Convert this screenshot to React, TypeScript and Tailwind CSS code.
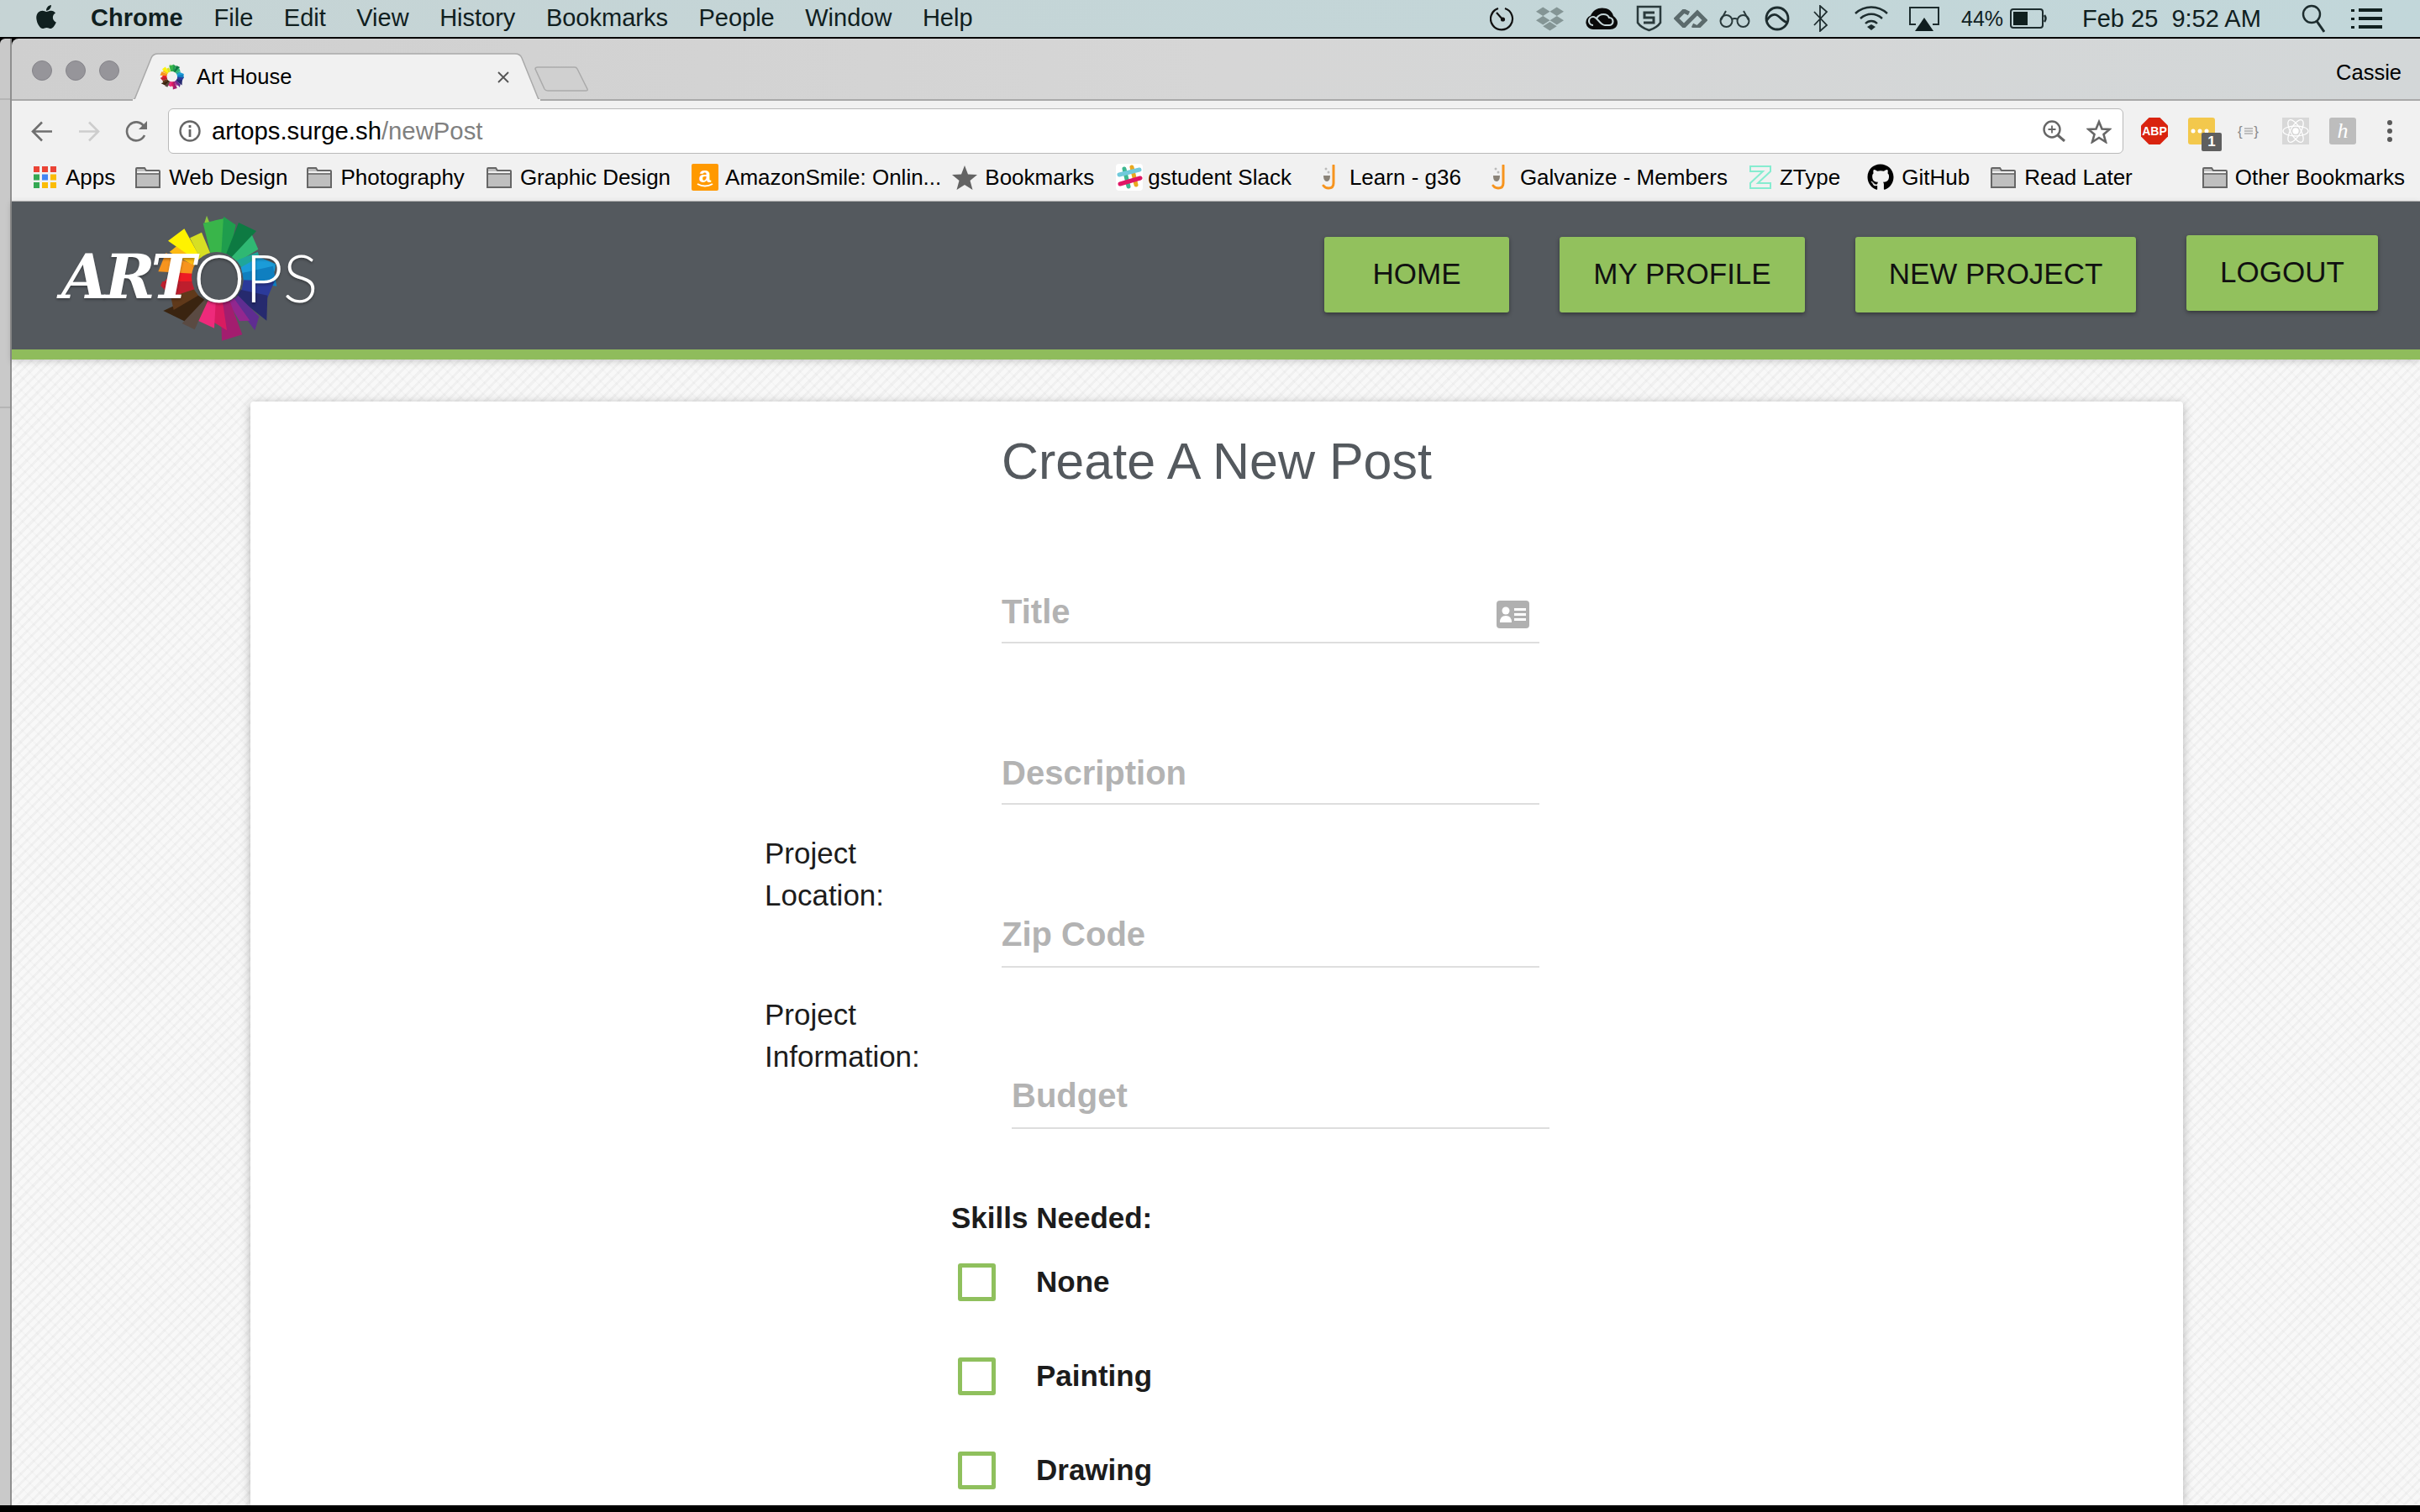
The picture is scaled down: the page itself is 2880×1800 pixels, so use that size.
import React from "react";
import { FaApple, FaGithub, FaDropbox } from "react-icons/fa";

const wedges: [string, string][] = [
  ["#8dc63f", "250,60 258,35 268,60"],
  ["#39b54a", "245,62 320,45 328,170 272,172"],
  ["#1f9d4d", "318,38 362,68 340,172 310,170"],
  ["#0d7a42", "372,60 435,90 350,185 328,170"],
  ["#2fb873", "420,105 442,155 370,200 345,185"],
  ["#1fa69a", "440,165 447,183 385,225 365,195"],
  ["#1b9cd8", "445,183 505,208 500,235 385,240 380,220"],
  ["#0f7fc0", "495,215 508,287 390,270 385,240"],
  ["#2b3a9a", "500,270 470,340 380,315 390,265"],
  ["#262a6e", "475,320 472,410 365,325 380,300"],
  ["#5f2d91", "445,395 430,445 350,338 370,320"],
  ["#92278f", "412,410 375,412 335,345 355,330"],
  ["#a31d6f", "385,460 312,482 308,345 340,340"],
  ["#d81b60", "330,445 265,405 285,345 315,345"],
  ["#ee2a7b", "285,437 222,408 262,338 290,345"],
  ["#5a4a42", "215,442 170,420 245,335 262,340"],
  ["#3a2410", "178,412 103,375 225,318 250,335"],
  ["#60391a", "140,372 130,325 212,298 228,320"],
  ["#be1e2d", "132,325 93,285 100,270 208,265 215,298"],
  ["#ed1c24", "108,270 140,230 210,240 208,270"],
  ["#f7941e", "85,235 112,168 215,212 210,242"],
  ["#fdb913", "125,165 150,145 228,195 215,215"],
  ["#fff200", "120,125 178,82 235,185 225,198"],
  ["#d7df23", "198,115 240,95 272,172 235,188"],
];

function Wheel({ hole, className, viewBox = "0 0 600 510" }: { hole: string; className: string; viewBox?: string }) {
  return (
    <svg viewBox={viewBox} className={className}>
      {wedges.map(([c, p], i) => (
        <polygon key={i} fill={c} points={p} />
      ))}
      <circle cx="294" cy="255" r="90" fill={hole} />
    </svg>
  );
}

function Folder() {
  return (
    <svg viewBox="0 0 30 25" className="w-[30px] h-[25px] shrink-0">
      <path d="M1 24V2q0-1 1-1h9l2 3h15q1 0 1 1v19z" fill="#bfbfbf" stroke="#666" strokeWidth="2" />
      <path d="M1 8h28" stroke="#666" strokeWidth="1.5" />
      <path d="M2 5h26v2H2z" fill="#f1f1f1" />
    </svg>
  );
}

function Apps() {
  const c = ["#ea4335", "#ea4335", "#ea4335", "#34a853", "#4285f4", "#fbbc05", "#34a853", "#fbbc05", "#fbbc05"];
  return (
    <svg viewBox="0 0 27 26" className="w-[27px] h-[26px] shrink-0">
      {c.map((f, i) => (
        <rect key={i} x={(i % 3) * 10} y={Math.floor(i / 3) * 9.5} width="7" height="7" fill={f} />
      ))}
    </svg>
  );
}

function Amazon() {
  return (
    <div className="w-[32px] h-[32px] shrink-0 rounded-[2px] bg-[#ff9900] relative flex justify-center">
      <span className="text-white font-bold text-[26px] leading-[26px]">a</span>
      <svg viewBox="0 0 32 32" className="absolute inset-0">
        <path d="M7 24q9 5 18 0" stroke="#fff" strokeWidth="2" fill="none" />
      </svg>
    </div>
  );
}

function Star() {
  return (
    <svg viewBox="0 0 30 29" className="w-[30px] h-[29px] shrink-0">
      <path d="M15 0l4 10.500 11 .500-8.500 7 3 11L15 23l-9.500 6 3-11L0 11l11-.500z" fill="#636363" />
    </svg>
  );
}

function Slack() {
  return (
    <svg viewBox="0 0 32 32" className="w-[32px] h-[32px] shrink-0">
      <rect width="32" height="32" rx="4" fill="#fff" />
      <g strokeWidth="5" strokeLinecap="round">
        <path d="M10 6l5 21" stroke="#3eb890" />
        <path d="M19 4l5 21" stroke="#e9a820" />
        <path d="M4 13l24-6" stroke="#70cadb" />
        <path d="M5 24l24-7" stroke="#e01765" />
      </g>
    </svg>
  );
}

function Galvanize() {
  return (
    <svg viewBox="0 0 18 30" className="w-[18px] h-[30px] shrink-0">
      <path d="M14 1v21q0 6-6 6-4 0-6-3" stroke="#f7941e" strokeWidth="3" fill="none" strokeLinecap="round" />
      <path d="M2 13h8q0 7-4 7t-4-7z" fill="#8a8378" />
      <circle cx="5" cy="5" r="1.500" fill="#bbb" />
      <circle cx="8" cy="9" r="1.500" fill="#bbb" />
    </svg>
  );
}

function ZType() {
  return (
    <svg viewBox="0 0 26 28" className="w-[26px] h-[28px] shrink-0">
      <path d="M1 1h24v6L10 21h15v6H1v-6L16 7H1z" fill="none" stroke="#86ecd0" strokeWidth="2" />
    </svg>
  );
}

const bookmarks: { icon: React.ReactNode; label: string; cls: string }[] = [
  { icon: <Apps />, label: "Apps", cls: "ml-[26px] gap-[11px]" },
  { icon: <Folder />, label: "Web Design", cls: "ml-[24px] gap-[10px]" },
  { icon: <Folder />, label: "Photography", cls: "ml-[23px] gap-[10px]" },
  { icon: <Folder />, label: "Graphic Design", cls: "ml-[26px] gap-[10px]" },
  { icon: <Amazon />, label: "AmazonSmile: Onlin...", cls: "ml-[25px] gap-[8px]" },
  { icon: <Star />, label: "Bookmarks", cls: "ml-[13px] gap-[9px]" },
  { icon: <Slack />, label: "gstudent Slack", cls: "ml-[26px] gap-[6px]" },
  { icon: <Galvanize />, label: "Learn - g36", cls: "ml-[36px] gap-[15px]" },
  { icon: <Galvanize />, label: "Galvanize - Members", cls: "ml-[36px] gap-[16px]" },
  { icon: <ZType />, label: "ZType", cls: "ml-[26px] gap-[10px]" },
  { icon: <FaGithub className="w-[32px] h-[32px] shrink-0 text-black" />, label: "GitHub", cls: "ml-[32px] gap-[9px]" },
  { icon: <Folder />, label: "Read Later", cls: "ml-[25px] gap-[10px]" },
];

function MenuIcons() {
  return (
    <div className="ml-auto flex items-center pr-[45px] text-[#10201f]">
      <svg viewBox="0 0 30 30" className="w-[30px] h-[30px]" fill="none" stroke="#111" strokeWidth="2.200">
        <path d="M10 3a13 13 0 1 0 8 0" />
        <path d="M8 8l8 9" />
        <circle cx="15.500" cy="16" r="1.500" fill="#111" />
      </svg>
      <FaDropbox className="ml-[25px] w-[33px] h-[33px] text-[#849595]" />
      <svg viewBox="0 0 38 28" className="ml-[26px] w-[38px] h-[28px]">
        <path d="M9 27a8.500 8.500 0 0 1-3-16.500C9 3 17 0 24 2c5 1 8 5 9 9 3 2 5 5 5 8 0 5-4 8-9 8z" fill="#0a0a0a" />
        <path d="M9 22a5 5 0 0 1 0-10c5 0 8 10 14 10h5a4.500 4.500 0 0 0 0-9c-2-5-11-6-15 1" fill="none" stroke="#c5d5d7" strokeWidth="2.200" />
      </svg>
      <svg viewBox="0 0 31 32" className="ml-[22px] w-[31px] h-[32px]" fill="none" stroke="#2a3a3c" strokeWidth="2.500">
        <path d="M2 2h27v19q-4 6-13.500 9Q6 27 2 21z" />
        <path d="M22 9H10v6h11v6H9" strokeWidth="3" />
      </svg>
      <svg viewBox="0 0 40 22" className="ml-[14px] w-[40px] h-[22px]" fill="none" stroke="#5b6a6c" strokeWidth="5">
        <path d="M18 5l-6-3-9 9 9 9 8-8 8-8 9 9-9 9-6-3" />
      </svg>
      <svg viewBox="0 0 37 22" className="ml-[14px] w-[37px] h-[22px]" fill="none" stroke="#2a3a3c" strokeWidth="2">
        <circle cx="8.500" cy="14" r="7" />
        <circle cx="28.500" cy="14" r="7" />
        <path d="M15 12q3.500-2 7 0M2 13L8 2M35 13L29 2" />
      </svg>
      <svg viewBox="0 0 30 30" className="ml-[17px] w-[30px] h-[30px]" fill="none" stroke="#1d2c2e" strokeWidth="2.800">
        <circle cx="15" cy="15" r="13" />
        <path d="M2 18c5-8 10-9 14-6s7 7 11 8" />
      </svg>
      <svg viewBox="0 0 18 32" className="ml-[28px] w-[18px] h-[32px]" fill="none" stroke="#1d2c2e" strokeWidth="1.800">
        <path d="M1 8l15 16-8 7V1l8 7L1 24" />
      </svg>
      <svg viewBox="0 0 40 30" className="ml-[31px] w-[40px] h-[30px]" fill="none" stroke="#1d2c2e" strokeWidth="2.400">
        <path d="M1 9c11-10 27-10 38 0M7 15c8-7 18-7 26 0M13 21c4-4 10-4 14 0" />
        <path d="M15 25l5-3 5 3-5 4z" fill="#1d2c2e" stroke="none" />
      </svg>
      <svg viewBox="0 0 36 29" className="ml-[25px] w-[36px] h-[29px]">
        <path d="M8 21H1V1h34v20h-7" fill="none" stroke="#1d2c2e" strokeWidth="2" />
        <path d="M18 13l11 16H7z" fill="#0f1d1f" />
      </svg>
      <span className="ml-[26px] text-[25px] leading-none w-[49px] whitespace-nowrap">44%</span>
      <svg viewBox="0 0 45 24" className="ml-[9px] w-[45px] h-[24px]">
        <rect x="1" y="1" width="38" height="22" rx="3" fill="none" stroke="#1d2c2e" strokeWidth="2" />
        <rect x="4" y="4" width="17" height="16" fill="#10201f" />
        <path d="M41 8q3 4 0 8" stroke="#1d2c2e" strokeWidth="2.500" fill="none" />
      </svg>
      <span className="ml-[41px] w-[214px] text-[29px] leading-none whitespace-pre">Feb 25  9:52 AM</span>
      <svg viewBox="0 0 28 34" className="ml-[47px] w-[28px] h-[34px]" fill="none" stroke="#1d2c2e" strokeWidth="2.400">
        <circle cx="12" cy="12" r="10" />
        <path d="M18 20l9 13" strokeWidth="3" />
      </svg>
      <svg viewBox="0 0 37 24" className="ml-[31px] w-[37px] h-[24px]" fill="#10201f">
        <rect x="0" y="1" width="4" height="3" />
        <rect x="9" y="0" width="28" height="4" />
        <rect x="0" y="11" width="4" height="3" />
        <rect x="9" y="10" width="28" height="4" />
        <rect x="0" y="21" width="4" height="3" />
        <rect x="9" y="20" width="28" height="4" />
      </svg>
    </div>
  );
}

function MenuBar() {
  const items = ["File", "Edit", "View", "History", "Bookmarks", "People", "Window", "Help"];
  return (
    <div className="h-[46px] shrink-0 border-b-2 border-black bg-gradient-to-r from-[#c6d4d5] to-[#c2d7da] flex items-center pl-[40px] text-[#10201f] text-[29px]">
      <FaApple className="w-[30px] h-[32px] text-[#10201f] -mt-[4px]" />
      <span className="ml-[38px] mr-[37px] font-bold">Chrome</span>
      <div className="flex gap-[36.500px]">
        {items.map((t) => (
          <span key={t}>{t}</span>
        ))}
      </div>
      <MenuIcons />
    </div>
  );
}

function TabStrip() {
  return (
    <div className="h-[74px] shrink-0 border-b-2 border-[#a9a9a9] bg-gradient-to-r from-[#cfcfcf] via-[#d6d6d6] to-[#d3d7d8] flex rounded-tl-[8px]">
      <div className="ml-[24px] mt-[26px] flex gap-[16px]">
        <div className="w-[24px] h-[24px] rounded-full bg-[#96959a] border border-[#85848a]" />
        <div className="w-[24px] h-[24px] rounded-full bg-[#96959a] border border-[#85848a]" />
        <div className="w-[24px] h-[24px] rounded-full bg-[#96959a] border border-[#85848a]" />
      </div>
      <div className="relative ml-[16px] mt-[17px] w-[485px] h-[57px] flex items-center pl-[32px] z-10">
        <svg viewBox="0 0 485 57" className="absolute inset-0 w-[485px] h-[57px]">
          <path d="M0 56q2 0 3-3L22 6q2-5 8-5h425q6 0 8 5l19 47q1 3 3 3z" fill="#f1f1f1" stroke="#a9a9a9" strokeWidth="1.500" />
          <path d="M0 57h485v-2H0z" fill="#f1f1f1" />
        </svg>
        <Wheel hole="#f1f1f1" viewBox="80 30 440 460" className="relative w-[30px] h-[31px]" />
        <span className="relative ml-[14px] text-[25.500px] leading-none text-black">Art House</span>
        <svg viewBox="0 0 14 14" className="absolute left-[434px] top-[22px] w-[14px] h-[14px]" stroke="#555" strokeWidth="1.800">
          <path d="M1 1l12 12M13 1L1 13" />
        </svg>
      </div>
      <svg viewBox="0 0 65 30" className="-ml-[7px] mt-[33px] w-[65px] h-[30px]">
        <path d="M1 3q0-2 3-2h44q2 0 3 2l12 24q1 2-2 2H16q-3 0-4-2z" fill="#d0d0d0" stroke="#aaa" strokeWidth="1.500" />
      </svg>
      <span className="ml-auto mr-[22px] mt-[24px] text-[25.500px] leading-[32px] text-black">Cassie</span>
    </div>
  );
}

function Toolbar() {
  return (
    <div className="h-[63px] shrink-0 bg-[#f1f1f1] flex pt-[9px]">
      <div className="w-[186px] shrink-0 flex items-center pl-[23px] h-[54px]">
        <svg viewBox="0 0 26 25" className="w-[26px] h-[25px]" fill="none" stroke="#6f6f6f" strokeWidth="2.600">
          <path d="M25 12.500H3M13 1.500L2 12.500l11 11" />
        </svg>
        <svg viewBox="0 0 26 25" className="ml-[30px] w-[26px] h-[25px]" fill="none" stroke="#cdcdcd" strokeWidth="2.600">
          <path d="M1 12.500h22M13 1.500l11 11-11 11" />
        </svg>
        <svg viewBox="0 0 28 26" className="ml-[30px] w-[28px] h-[26px]" fill="none" stroke="#6f6f6f" strokeWidth="2.600">
          <path d="M23 18a11 11 0 1 1-1-11" />
          <path d="M26 1v10H16z" fill="#6f6f6f" stroke="none" />
        </svg>
      </div>
      <div className="w-[2327px] h-[54px] shrink-0 bg-white border border-[#b9b9b9] rounded-[6px] flex items-center pl-[12px]">
        <svg viewBox="0 0 26 26" className="w-[26px] h-[26px]" fill="none" stroke="#666" strokeWidth="2.400">
          <circle cx="13" cy="13" r="11.500" />
          <path d="M13 11v9" strokeWidth="2.800" />
          <path d="M13 6v3" strokeWidth="2.800" />
        </svg>
        <span className="ml-[13px] text-[29.300px] leading-none">
          <span className="text-black">artops.surge.sh</span>
          <span className="text-[#808080]">/newPost</span>
        </span>
        <svg viewBox="0 0 28 26" className="ml-auto w-[28px] h-[26px]" fill="none" stroke="#666" strokeWidth="2.400">
          <circle cx="11" cy="11" r="9.500" />
          <path d="M18 18l8 7" strokeWidth="3" />
          <path d="M11 6.500v9M6.500 11h9" strokeWidth="1.800" />
        </svg>
        <svg viewBox="0 0 30 29" className="ml-[24px] mr-[13px] w-[30px] h-[29px]" fill="none" stroke="#666" strokeWidth="2.600">
          <path d="M15 3l3.500 8.500 9 .500-7 6 2.500 9-8-5-8 5 2.500-9-7-6 9-.500z" />
        </svg>
      </div>
      <div className="flex items-center h-[54px] pl-[21px]">
        <div className="relative w-[32px] h-[32px] flex items-center justify-center">
          <svg viewBox="0 0 32 32" className="absolute inset-0">
            <polygon points="9.500,0 22.500,0 32,9.500 32,22.500 22.500,32 9.500,32 0,22.500 0,9.500" fill="#d9230f" />
          </svg>
          <span className="relative text-white font-bold text-[14px] leading-none">ABP</span>
        </div>
        <div className="relative ml-[24px] w-[32px] h-[32px] rounded-[3px] bg-[#f3c84c]">
          <svg viewBox="0 0 32 32" className="absolute inset-0">
            <circle cx="6" cy="16" r="2.500" fill="#fff" />
            <circle cx="14" cy="16" r="2.500" fill="#fff" />
            <circle cx="22" cy="16" r="2.500" fill="#fff" />
          </svg>
          <span className="absolute left-[16px] top-[18px] w-[24px] h-[22px] rounded-[2px] bg-[#5f5f5f] text-white font-bold text-[17px] leading-[22px] text-center">1</span>
        </div>
        <div className="ml-[27px] w-[25px] flex items-center justify-between text-[#8b8b8b] text-[17px] leading-none">
          <span>{"{"}</span>
          <svg viewBox="0 0 10 10" className="w-[10px] h-[10px]" stroke="#8b8b8b" strokeWidth="1.200">
            <path d="M0 2h10M0 5h10M0 8h10" />
          </svg>
          <span>{"}"}</span>
        </div>
        <svg viewBox="0 0 32 32" className="ml-[28px] w-[32px] h-[32px]" fill="none" stroke="#fff" strokeWidth="1.300">
          <rect width="32" height="32" fill="#d8d8d8" stroke="none" />
          <ellipse cx="16" cy="16" rx="15" ry="6" />
          <ellipse cx="16" cy="16" rx="15" ry="6" transform="rotate(60 16 16)" />
          <ellipse cx="16" cy="16" rx="15" ry="6" transform="rotate(120 16 16)" />
          <circle cx="16" cy="16" r="3" fill="#fff" />
        </svg>
        <div className="ml-[24px] w-[32px] h-[32px] rounded-[3px] bg-[#bdbdbd] flex items-center justify-center text-white italic text-[26px] leading-none font-['Liberation_Serif',serif]">h</div>
        <svg viewBox="0 0 6 26" className="ml-[37px] w-[6px] h-[26px]" fill="#5a5a5a">
          <circle cx="3" cy="3" r="3" />
          <circle cx="3" cy="13" r="3" />
          <circle cx="3" cy="23" r="3" />
        </svg>
      </div>
    </div>
  );
}

function Bookmarks() {
  return (
    <div className="h-[57px] shrink-0 bg-[#f1f1f1] border-b border-[#b9b9b9] flex items-center text-[26px] leading-none text-black whitespace-nowrap">
      {bookmarks.map((b) => (
        <div key={b.label} className={"flex items-center " + b.cls}>
          {b.icon}
          <span>{b.label}</span>
        </div>
      ))}
      <div className="ml-auto mr-[18px] flex items-center gap-[9px]">
        <Folder />
        <span>Other Bookmarks</span>
      </div>
    </div>
  );
}

function Header() {
  const btn = "h-[90px] rounded-[3px] bg-[#92c15d] shadow-[0_2px_5px_rgba(0,0,0,0.4)] flex items-center justify-center pb-[4px] text-[35px] leading-none text-[#111]";
  return (
    <div className="relative z-10 h-[188px] shrink-0 border-b-[12px] border-[#8fbc5c] bg-[#54595e] shadow-[0_2px_8px_rgba(0,0,0,0.18)] flex items-start">
      <div className="relative ml-[56px] h-[176px] flex items-center pt-[4px] text-white">
        <Wheel hole="#54595e" className="absolute left-[90px] top-[5px] w-[200px] h-[170px]" />
        <span className="relative w-[160px] pl-[3px] font-['DejaVu_Serif',serif] font-bold italic text-[72px] leading-none tracking-[-4px] [text-shadow:0_2px_3px_rgba(0,0,0,0.3)]">ART</span>
        <span className="relative font-['Lato',sans-serif] font-light text-[78px] leading-none [text-shadow:0_2px_3px_rgba(0,0,0,0.3)]">OPS</span>
      </div>
      <div className="ml-auto mr-[50px] mt-[42px] flex items-start gap-[60px]">
        <div className={btn + " w-[220px]"}>HOME</div>
        <div className={btn + " w-[292px]"}>MY PROFILE</div>
        <div className={btn + " w-[334px]"}>NEW PROJECT</div>
        <div className={btn + " w-[228px] -mt-[2px]"}>LOGOUT</div>
      </div>
    </div>
  );
}

function Field({ label, icon, className }: { label: string; icon?: boolean; className: string }) {
  return (
    <div className={"w-[640px] border-b-2 border-[#dedede] flex items-end justify-between " + className}>
      <span className="text-[40px] leading-none font-bold text-[#b3b3b3]">{label}</span>
      {icon && (
        <svg viewBox="0 0 39 33" className="w-[39px] h-[33px] mr-[12px]">
          <rect width="39" height="33" rx="4" fill="#b0b0b0" />
          <circle cx="11" cy="12" r="4.500" fill="#fff" />
          <path d="M4 26q0-8 7-8t7 8z" fill="#fff" />
          <path d="M21 9h14v3H21zM21 15h14v3H21zM21 21h14v3H21z" fill="#fff" />
        </svg>
      )}
    </div>
  );
}

function Check({ label }: { label: string }) {
  return (
    <div className="h-[112px] flex items-center pl-[8px]">
      <div className="w-[45px] h-[45px] rounded-[3px] border-[5px] border-[#8fc05d]" />
      <span className="ml-[48px] pb-[1px] text-[35px] leading-none font-bold text-[#1c1c1c]">{label}</span>
    </div>
  );
}

function Card() {
  return (
    <div className="ml-[284px] w-[2300px] h-full rounded-t-[4px] bg-white shadow-[0_2px_12px_rgba(0,0,0,0.28)] pl-[612px] pt-[41px] text-[#1c1c1c]">
      <h1 className="ml-[282px] text-[61px] leading-[60px] text-[#54595e]">Create A New Post</h1>
      <div className="flex">
        <div className="w-[282px]" />
        <Field label="Title" icon className="h-[187px] pb-[16px]" />
      </div>
      <div className="flex">
        <div className="w-[282px]" />
        <Field label="Description" className="h-[192px] pb-[16px]" />
      </div>
      <div className="flex">
        <div className="w-[282px] pt-[33px] text-[35px] leading-[50px]">
          Project
          <br />
          Location:
        </div>
        <Field label="Zip Code" className="h-[194px] pb-[18px]" />
      </div>
      <div className="flex">
        <div className="w-[282px] pt-[31px] text-[35px] leading-[50px]">
          Project
          <br />
          Information:
        </div>
        <Field label="Budget" className="h-[192px] ml-[12px] pb-[18px]" />
      </div>
      <div className="ml-[222px] mt-[88px]">
        <div className="text-[35px] leading-none font-bold mb-[3px]">Skills Needed:</div>
        <Check label="None" />
        <Check label="Painting" />
        <Check label="Drawing" />
      </div>
    </div>
  );
}

export default function App() {
  return (
    <div className="w-[2880px] h-[1800px] overflow-hidden flex flex-col bg-black font-['Liberation_Sans',Arial,sans-serif]">
      <MenuBar />
      <div className="h-[1746px] shrink-0 flex">
        <div className="w-[14px] shrink-0 bg-[#c9c9c9] border-r-2 border-[#8f8f8f] flex flex-col rounded-tl-[6px]">
          <div className="h-[73px] border-b-2 border-[#b5b5b5]" />
          <div className="h-[367px] border-b-2 border-[#b5b5b5]" />
        </div>
        <div className="flex-1 min-w-0 flex flex-col">
          <TabStrip />
          <Toolbar />
          <Bookmarks />
          <Header />
          <div className="flex-1 min-h-0 pt-[50px] overflow-hidden bg-[#f8f8f8] bg-[repeating-linear-gradient(135deg,rgba(0,0,0,0.03)_0,rgba(0,0,0,0.03)_3px,transparent_3px,transparent_8px),repeating-linear-gradient(45deg,rgba(0,0,0,0.015)_0,rgba(0,0,0,0.015)_2px,transparent_2px,transparent_11px)]">
            <Card />
          </div>
        </div>
      </div>
      <div className="h-[8px] shrink-0 bg-black" />
    </div>
  );
}
